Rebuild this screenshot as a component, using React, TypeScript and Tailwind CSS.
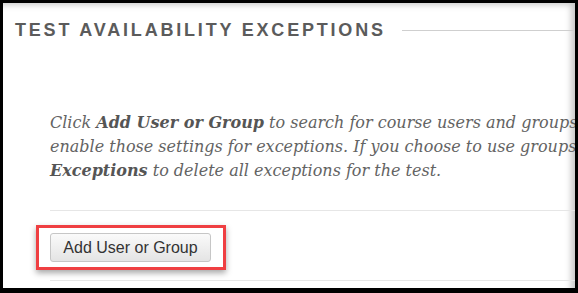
import React from "react";

const serif = { fontFamily: '"DejaVu Serif", Georgia, serif' };

export default function App() {
  return (
    <div className="w-[578px] h-[293px] bg-black pt-[3px] pl-[3px] pr-[3px] pb-[5px] overflow-hidden">
      <div className="relative h-full w-full bg-white overflow-hidden shadow-[inset_-7px_5px_6px_-3px_rgba(0,0,0,0.22)]">
        {/* section header */}
        <div className="flex items-center pt-[16px] pl-[12px]">
          <h2
            className="text-[18px] leading-[22px] font-bold tracking-[2.8px] text-[#5b5b5b] whitespace-nowrap"
            style={{ fontFamily: '"Liberation Sans", Arial, sans-serif' }}
          >
            TEST AVAILABILITY EXCEPTIONS
          </h2>
          <div className="ml-[16px] flex-1 h-px bg-[#cfcfcf]" />
        </div>

        <div className="pl-[47px]">
          <p
            className="mt-[70px] text-[16px] leading-[24px] italic text-[#636363] whitespace-nowrap"
            style={serif}
          >
            Click <b className="text-[#555]">Add User or Group</b> to search for course users and groups. After you add
            them, you can
            <br />
            enable those settings for exceptions. If you choose to use groups, you can edit them later. Select{" "}
            <b className="text-[#555]">Remove All</b>
            <br />
            <b className="text-[#555]">Exceptions</b> to delete all exceptions for the test.
          </p>

          <div className="mt-[27px] h-px bg-[#e6e6e6]" />

          <div className="mt-[14px] -ml-[14px] w-[190px] border-[3px] border-[#ef3f42] pl-[11px] pt-[5px] pb-[5px] shadow-[0_3px_6px_rgba(0,0,0,0.35)]">
            <button
              className="h-[29px] w-[161px] rounded-[3px] border border-[#c6c6c6] bg-gradient-to-b from-[#fafafa] to-[#e4e4e4] text-[16px] text-[#333] leading-none"
              style={{ fontFamily: '"Liberation Sans", Arial, sans-serif' }}
            >
              Add User or Group
            </button>
          </div>

          <div className="mt-[10px] h-px bg-[#e6e6e6]" />
        </div>
      </div>
    </div>
  );
}
